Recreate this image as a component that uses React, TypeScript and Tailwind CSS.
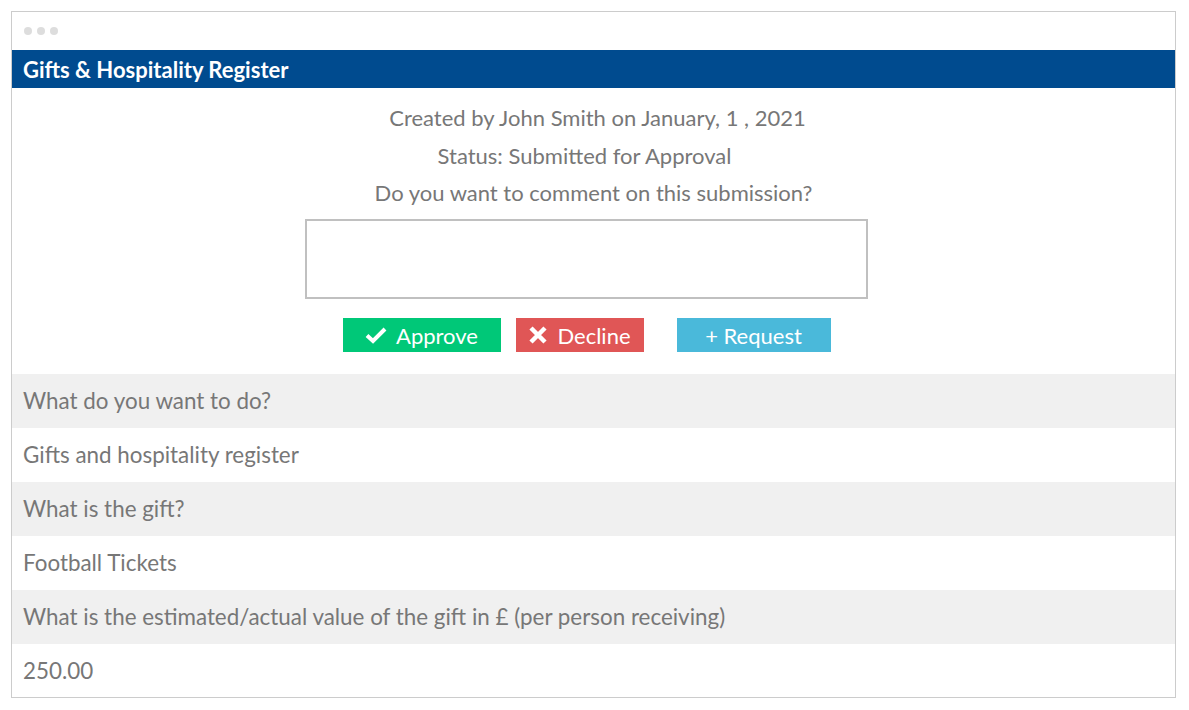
import React from "react";

const rows: { text: string; shaded: boolean }[] = [
  { text: "What do you want to do?", shaded: true },
  { text: "Gifts and hospitality register", shaded: false },
  { text: "What is the gift?", shaded: true },
  { text: "Football Tickets", shaded: false },
  { text: "What is the estimated/actual value of the gift in £ (per person receiving)", shaded: true },
  { text: "250.00", shaded: false },
];

export default function App() {
  return (
    <div className="w-[1189px] h-[710px] bg-white pt-[11px] pl-[11px]" style={{ fontFamily: "Lato, 'Open Sans', sans-serif" }}>
      <div className="w-[1165px] h-[687px] border border-[#cccccc] flex flex-col overflow-hidden">
        {/* window dots */}
        <div className="h-[38px] shrink-0 flex items-center gap-[5px] pl-[12px]">
          <span className="w-[8px] h-[8px] rounded-full bg-[#dddddd]" />
          <span className="w-[8px] h-[8px] rounded-full bg-[#dddddd]" />
          <span className="w-[8px] h-[8px] rounded-full bg-[#dddddd]" />
        </div>

        <div className="h-[38px] shrink-0 bg-[#004b8f] flex items-center pl-[11px] text-white font-bold text-[22px]">
          Gifts &amp; Hospitality Register
        </div>

        <div className="flex flex-col items-center text-[#777777] text-[22px] pt-[11px] shrink-0">
          <p className="leading-[38px] h-[38px] pl-[8px]">Created by John Smith on January, 1 , 2021</p>
          <p className="leading-[38px] h-[38px] pr-[18px]">Status: Submitted for Approval</p>
          <p className="leading-[36px] h-[36px]">Do you want to comment on this submission?</p>
          <div className="flex flex-col items-center pr-[14px]">
            <textarea className="mt-[8px] w-[563px] h-[80px] border-2 border-[#c0c0c0] resize-none outline-none" />
            <div className="flex mt-[19px] mb-[22px] h-[34px] text-white text-[22px]">
              <button className="w-[158px] bg-[#00c878] flex items-center justify-center gap-[9px]">
                <svg width="22" height="18" viewBox="0 0 22 18">
                  <path d="M2 9.5 L8 15 L20 3" stroke="white" strokeWidth="4" fill="none" strokeLinejoin="miter" />
                </svg>
                Approve
              </button>
              <button className="ml-[15px] w-[128px] bg-[#e05656] flex items-center justify-center gap-[9px]">
                <svg width="20" height="20" viewBox="0 0 20 20">
                  <path d="M3 3 L17 17 M17 3 L3 17" stroke="white" strokeWidth="4.5" fill="none" />
                </svg>
                Decline
              </button>
              <button className="ml-[33px] w-[154px] bg-[#4ab9da] flex items-center justify-center">
                + Request
              </button>
            </div>
          </div>
        </div>

        <div className="flex flex-col">
          {rows.map((r, i) => (
            <div
              key={i}
              className={`h-[54px] shrink-0 flex items-center pl-[11px] text-[22.4px] text-[#777777] ${r.shaded ? "bg-[#f0f0f0]" : "bg-white"}`}
            >
              {r.text}
            </div>
          ))}
        </div>
      </div>
    </div>
  );
}
